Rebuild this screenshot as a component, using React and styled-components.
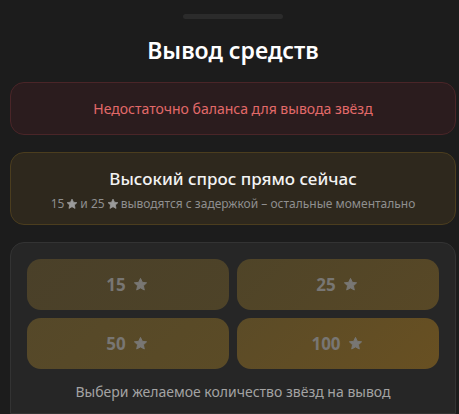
import React from "react";
import styled, { createGlobalStyle } from "styled-components";

const Global = createGlobalStyle`
  html, body { margin: 0; padding: 0; background: #1c1c1c; }
  body { font-family: "Noto Sans", "Open Sans", sans-serif; -webkit-font-smoothing: antialiased; }
`;

const Sheet = styled.div`
  width: 459px;
  height: 414px;
  overflow: hidden;
  box-sizing: border-box;
  background: #1c1c1c;
  padding: 14px 3px 0 10px;
  display: flex;
  flex-direction: column;
`;

const Handle = styled.div`
  align-self: center;
  width: 100px;
  height: 5px;
  border-radius: 3px;
  background: #2b2b2b;
`;

const Title = styled.h1`
  margin: 16px 0 0;
  text-align: center;
  color: #fff;
  font-family: "Noto Sans", sans-serif;
  font-weight: 600;
  font-size: 23px;
  line-height: 30px;
`;

const Card = styled.div`
  box-sizing: border-box;
  border-radius: 14px;
  border: 1px solid ${(p) => p.$border};
  background: ${(p) => p.$bg};
  display: flex;
  flex-direction: column;
  align-items: center;
  text-align: center;
`;

const ErrorCard = styled(Card)`
  margin-top: 17px;
  height: 53px;
  justify-content: center;
`;

const ErrorText = styled.div`
  color: #e36a6a;
  font-size: 14px;
  line-height: 18px;
`;

const DemandCard = styled(Card)`
  margin-top: 17px;
  height: 73px;
  padding-top: 15px;
`;

const DemandTitle = styled.div`
  color: #f3f3f3;
  font-size: 17px;
  font-weight: 500;
  line-height: 22px;
`;

const DemandSub = styled.div`
  margin-top: 6px;
  color: #8f8f8f;
  font-size: 12px;
  line-height: 16px;
  display: flex;
  align-items: center;
`;

const Panel = styled(Card)`
  margin-top: 17px;
  flex: 1;
  border-bottom-left-radius: 0;
  border-bottom-right-radius: 0;
  padding: 16px 16px 0;
  align-items: stretch;
`;

const Grid = styled.div`
  display: grid;
  grid-template-columns: 1fr 1fr;
  gap: 8px 8px;
`;

const Option = styled.button`
  height: 51px;
  border: none;
  border-radius: 14px;
  background: ${(p) => p.$bg};
  color: #787673;
  font-family: "Noto Sans", sans-serif;
  font-weight: 700;
  font-size: 17px;
  display: flex;
  align-items: center;
  justify-content: center;
  gap: 5px;
  padding: 0;
  cursor: pointer;
`;

const Hint = styled.div`
  margin-top: 14px;
  color: #a3a3a3;
  font-size: 14px;
  line-height: 18px;
  text-align: center;
`;

const StarIcon = styled.svg`
  display: inline-block;
  margin: 0 2px;
`;

const Star = ({ size = 12, color = "#888" }) => (
  <StarIcon width={size} height={size} viewBox="0 0 24 24">
    <path
      d="M12 2.2l2.95 6.3 6.85.8-5.1 4.7 1.4 6.8L12 17.4 5.9 20.8l1.4-6.8-5.1-4.7 6.85-.8z"
      fill={color}
      stroke={color}
      strokeWidth="1.5"
      strokeLinejoin="round"
    />
  </StarIcon>
);

const options = [
  { v: 15, bg: "linear-gradient(135deg,#4a4029,#4e4328)" },
  { v: 25, bg: "linear-gradient(135deg,#4f4428,#584826)" },
  { v: 50, bg: "linear-gradient(135deg,#554829,#5b4b26)" },
  { v: 100, bg: "linear-gradient(135deg,#5b4b27,#685022)" },
];

export default function App() {
  return (
    <>
      <Global />
      <Sheet>
        <Handle />
        <Title>Вывод средств</Title>
        <ErrorCard $bg="#2b1c1e" $border="#4a2528">
          <ErrorText>Недостаточно баланса для вывода звёзд</ErrorText>
        </ErrorCard>
        <DemandCard $bg="#2e281d" $border="#4b3d1e">
          <DemandTitle>Высокий спрос прямо сейчас</DemandTitle>
          <DemandSub>
            15<Star size={12} color="#9a9a9a" />и 25<Star size={12} color="#9a9a9a" />выводятся с задержкой – остальные моментально
          </DemandSub>
        </DemandCard>
        <Panel $bg="#262626" $border="#333333">
          <Grid>
            {options.map((o) => (
              <Option key={o.v} $bg={o.bg}>
                {o.v}
                <Star size={15} color="#787673" />
              </Option>
            ))}
          </Grid>
          <Hint>Выбери желаемое количество звёзд на вывод</Hint>
        </Panel>
      </Sheet>
    </>
  );
}
